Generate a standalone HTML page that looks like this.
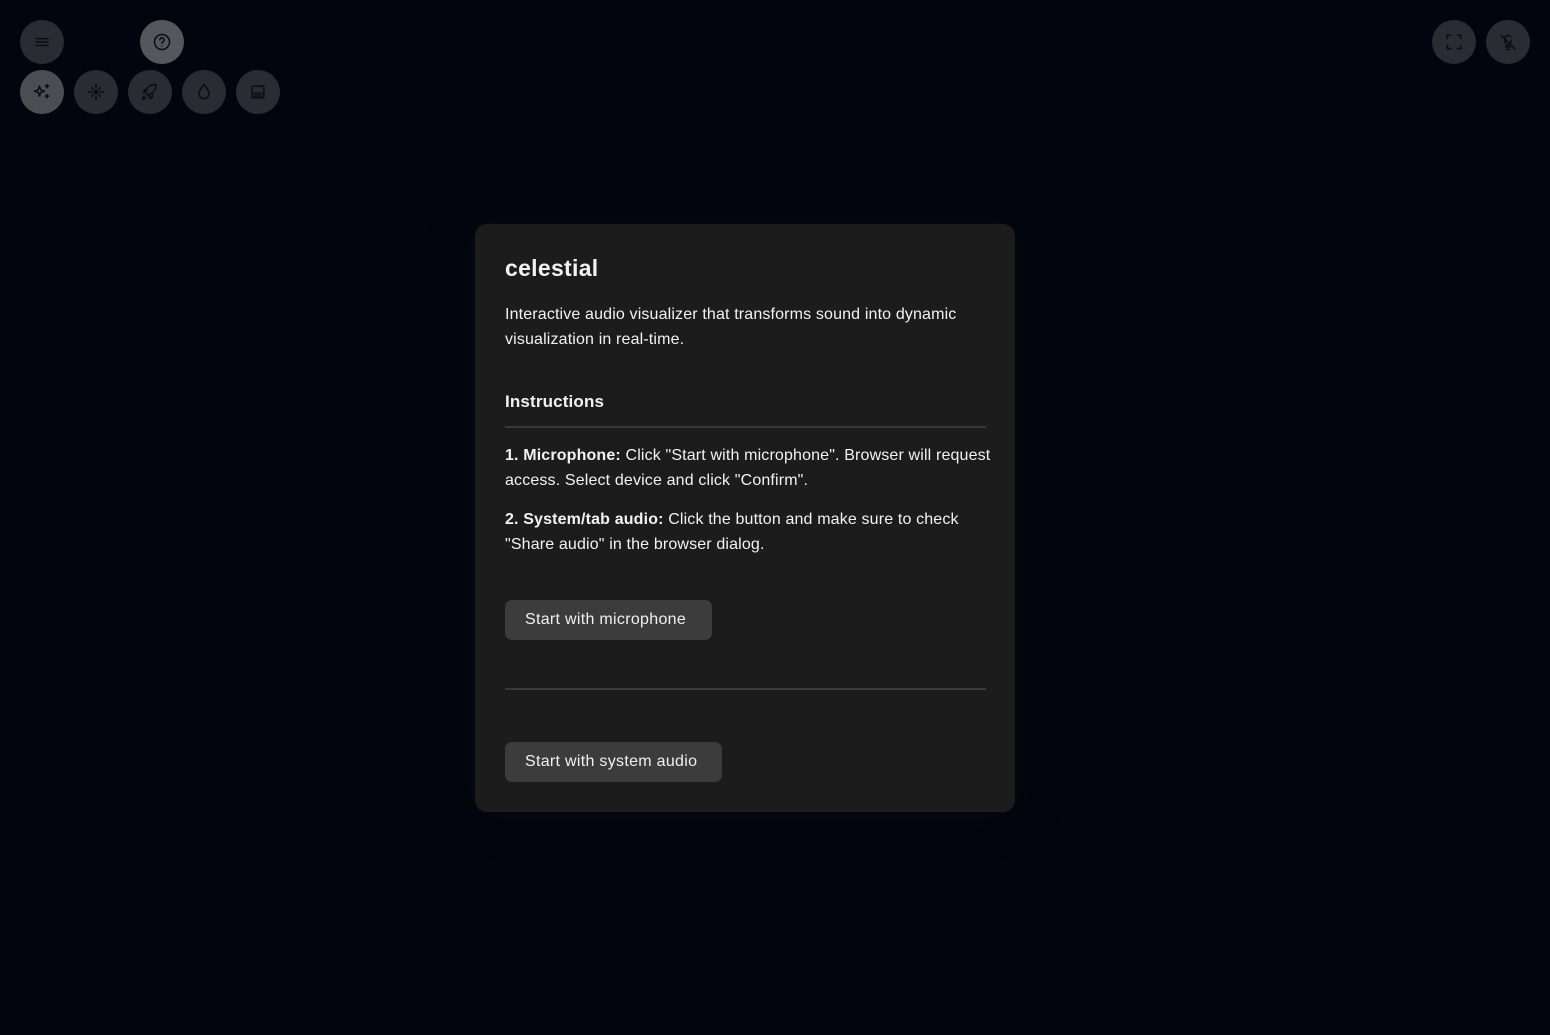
<!DOCTYPE html>
<html><head><style>
body{margin:0;width:1550px;height:1035px;background:#03050e;font-family:"Liberation Sans",sans-serif;position:relative;overflow:hidden;color:#f2f2f2}
.b{position:absolute;width:44px;height:44px;border-radius:50%;background:#2a2c33;display:flex;align-items:center;justify-content:center}
.b svg{width:20px;height:20px;fill:none;stroke:#0c0d12;stroke-width:1.8;stroke-linecap:round;stroke-linejoin:round}
.card{position:absolute;left:475px;top:224px;width:540px;height:588px;background:#1c1c1c;border-radius:12px;box-shadow:0 0 40px rgba(12,12,16,.5)}
h1{margin:0;position:absolute;left:30px;top:31px;font-size:23px;font-weight:bold;letter-spacing:0.3px}
p{position:absolute;left:30px;width:490px;margin:0;font-size:16px;line-height:25px;letter-spacing:0.15px}
.btn{position:absolute;left:30px;height:40px;background:#3c3c3c;border-radius:7px;font-size:16px;line-height:40px;padding:0 20px;box-sizing:border-box;color:#f0f0f0;letter-spacing:0.3px}
.hr{position:absolute;left:30px;width:481px;height:2px;background:#3a3a3a}
</style></head><body>
<div class="b" style="left:20px;top:20px"><svg viewBox="0 0 24 24"><path d="M5 8h14M5 12h14M5 16h14"/></svg></div>
<div class="b" style="left:140px;top:20px;background:#55575d"><svg viewBox="0 0 24 24"><circle cx="12" cy="12" r="9"/><path d="M9.5 9.5a2.5 2.5 0 1 1 3.5 2.3c-.7.4-1 1-1 1.7M12 17h.01"/></svg></div>
<div class="b" style="left:20px;top:70px;background:#4b4d53"><svg viewBox="0 0 24 24"><path d="M9 5l1.5 4.5L15 11l-4.5 1.5L9 17l-1.5-4.5L3 11l4.5-1.5zM18 3v4M16 5h4M18 15v4M16 17h4"/></svg></div>
<div class="b" style="left:74px;top:70px"><svg viewBox="0 0 24 24"><circle cx="12" cy="12" r="2" fill="#0c0d12"/><path d="M12 3v4M12 17v4M3 12h4M17 12h4M7 7l1.5 1.5M17 7l-1.5 1.5M7 17l1.5-1.5M17 17l-1.5-1.5"/></svg></div>
<div class="b" style="left:128px;top:70px"><svg viewBox="0 0 24 24"><path d="M5 17c-1.5 1-2 4-2 4s3-.5 4-2M9 15l-3-3 4-6c3-3 7-3 9-3 0 2 0 6-3 9l-6 4zM9 15l3 3M7 12H4l2-3h3M12 17v3l3-2v-3"/></svg></div>
<div class="b" style="left:182px;top:70px"><svg viewBox="0 0 24 24"><path d="M12 3s-6 6.5-6 11a6 6 0 0 0 12 0c0-4.5-6-11-6-11z"/></svg></div>
<div class="b" style="left:236px;top:70px"><svg viewBox="0 0 24 24"><rect x="5" y="5" width="14" height="14" rx="1"/><path d="M7 13h10M7 15h10M7 17h10" stroke-width="1.3"/></svg></div>
<div class="b" style="left:1432px;top:20px"><svg viewBox="0 0 24 24"><path d="M4 8V4h4M16 4h4v4M20 16v4h-4M8 20H4v-4"/></svg></div>
<div class="b" style="left:1486px;top:20px"><svg viewBox="0 0 24 24"><path d="M9 18h6M10 21h4M8 8a4 4 0 0 1 7-2.5M16 10c0 2-1 3-2 4v2h-4v-2c-1-1-2-2-2-4M4 4l16 16"/></svg></div>
<div class="card">
<h1>celestial</h1>
<p style="top:78px">Interactive audio visualizer that transforms sound into dynamic visualization in real-time.</p>
<p style="top:165px;font-weight:bold;font-size:17px">Instructions</p>
<div class="hr" style="top:202px"></div>
<p style="top:219px"><b>1. Microphone:</b> Click "Start with microphone". Browser will request<br>access. Select device and click "Confirm".</p>
<p style="top:283px"><b>2. System/tab audio:</b> Click the button and make sure to check<br>"Share audio" in the browser dialog.</p>
<div class="btn" style="top:376px;width:207px">Start with microphone</div>
<div class="hr" style="top:464px"></div>
<div class="btn" style="top:518px;width:217px">Start with system audio</div>
</div>
</body></html>
